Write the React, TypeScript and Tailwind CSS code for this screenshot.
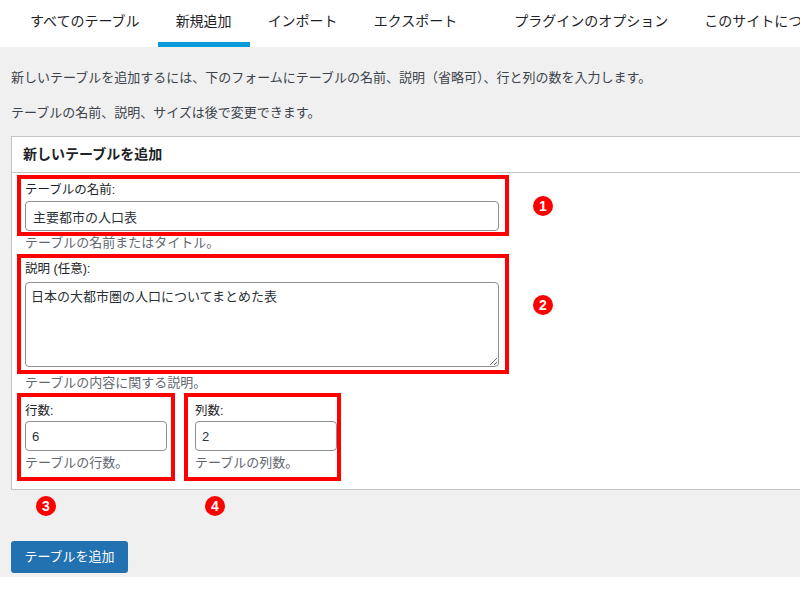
import React from "react";

const tabs = [
  { label: "すべてのテーブル" },
  { label: "新規追加", active: true },
  { label: "インポート" },
  { label: "エクスポート" },
  { label: "プラグインのオプション", gap: true },
  { label: "このサイトについて" },
];

function Marker({ n, className }: { n: number; className: string }) {
  return (
    <div
      className={`absolute w-5 h-5 rounded-full bg-[#ff0000] text-white text-[14px] font-bold leading-5 text-center ${className}`}
    >
      {n}
    </div>
  );
}

export default function App() {
  return (
    <div className="relative w-[800px] h-[600px] overflow-hidden bg-white font-['Liberation_Sans','Noto_Sans_CJK_JP',sans-serif] text-[#1d2327]">
      {/* Tabs */}
      <nav className="flex h-[47px] pl-[12px] bg-white whitespace-nowrap">
        {tabs.map((t) => (
          <div
            key={t.label}
            className={`h-[47px] shrink-0 px-[18px] leading-[42px] text-[14px] border-b-[5px] ${
              t.active ? "border-[#0a9ad9]" : "border-transparent"
            } ${t.gap ? "ml-[21px]" : ""}`}
          >
            {t.label}
          </div>
        ))}
      </nav>

      {/* Main */}
      <main className="h-[530px] bg-[#f0f0f1] pt-[21px]">
        <p className="h-[20px] pl-[11px] text-[13px] leading-[20px] text-[#3c434a]">
          新しいテーブルを追加するには、下のフォームにテーブルの名前、説明（省略可）、行と列の数を入力します。
        </p>
        <p className="h-[20px] mt-[15px] pl-[11px] text-[13px] leading-[20px] text-[#3c434a]">
          テーブルの名前、説明、サイズは後で変更できます。
        </p>

        {/* Card */}
        <section className="mt-[13px] ml-[11px] w-[820px] bg-white border border-[#c3c4c7]">
          <div className="h-[36px] flex items-center pl-[11px] border-b border-[#c3c4c7] text-[14px] font-bold">
            新しいテーブルを追加
          </div>

          <div className="pl-[5px] pt-[2px] pb-[8px]">
            {/* Name */}
            <div className="w-[492px] border-4 border-[#ff0000] px-1 pt-[2px] pb-[1px]">
              <label className="block h-[18px] text-[12.5px] leading-[18px]">テーブルの名前:</label>
              <input
                readOnly
                value="主要都市の人口表"
                className="mt-[2px] block w-[474px] h-[30px] px-[7px] rounded-[4px] border border-[#8c8f94] text-[13px] text-[#2c3338] outline-none"
              />
            </div>
            <p className="h-[14px] pl-[8px] text-[13px] leading-[14px] text-[#646970]">テーブルの名前またはタイトル。</p>

            {/* Description */}
            <div className="mt-[4px] w-[492px] border-4 border-[#ff0000] px-1 pt-[2px] pb-[3px]">
              <label className="block h-[18px] text-[12.5px] leading-[18px]">説明 (任意):</label>
              <textarea
                readOnly
                value="日本の大都市圏の人口についてまとめた表"
                className="mt-[4px] block w-[474px] h-[85px] px-[5px] pt-[5px] rounded-[4px] border border-[#8c8f94] text-[13px] leading-[18px] text-[#2c3338] outline-none"
              />
            </div>
            <p className="h-[14px] mt-[2px] pl-[8px] text-[13px] leading-[14px] text-[#646970]">テーブルの内容に関する説明。</p>

            {/* Rows / Columns */}
            <div className="mt-[3px] flex gap-[9px]">
              <div className="w-[158px] border-4 border-[#ff0000] pl-1 pt-[5px] pb-[7px]">
                <label className="block h-[18px] text-[12.5px] leading-[18px]">行数:</label>
                <input
                  readOnly
                  value="6"
                  className="mt-[1px] block w-[142px] h-[30px] px-[6px] rounded-[4px] border border-[#8c8f94] text-[13px] text-[#2c3338] outline-none"
                />
                <p className="h-[14px] mt-[5px] text-[13px] leading-[14px] text-[#646970]">テーブルの行数。</p>
              </div>
              <div className="w-[157px] border-4 border-[#ff0000] pl-[7px] pt-[5px] pb-[7px]">
                <label className="block h-[18px] text-[12.5px] leading-[18px]">列数:</label>
                <input
                  readOnly
                  value="2"
                  className="mt-[1px] block w-[142px] h-[30px] px-[6px] rounded-[4px] border border-[#8c8f94] text-[13px] text-[#2c3338] outline-none"
                />
                <p className="h-[14px] mt-[5px] text-[13px] leading-[14px] text-[#646970]">テーブルの列数。</p>
              </div>
            </div>
          </div>
        </section>

        <button className="block mt-[51px] ml-[11px] w-[117px] h-[32px] rounded-[3px] bg-[#2271b1] text-white text-[13px]">
          テーブルを追加
        </button>
      </main>

      {/* Annotation markers */}
      <Marker n={1} className="left-[533px] top-[196px]" />
      <Marker n={2} className="left-[533px] top-[295px]" />
      <Marker n={3} className="left-[36px] top-[496px]" />
      <Marker n={4} className="left-[205px] top-[496px]" />
    </div>
  );
}
